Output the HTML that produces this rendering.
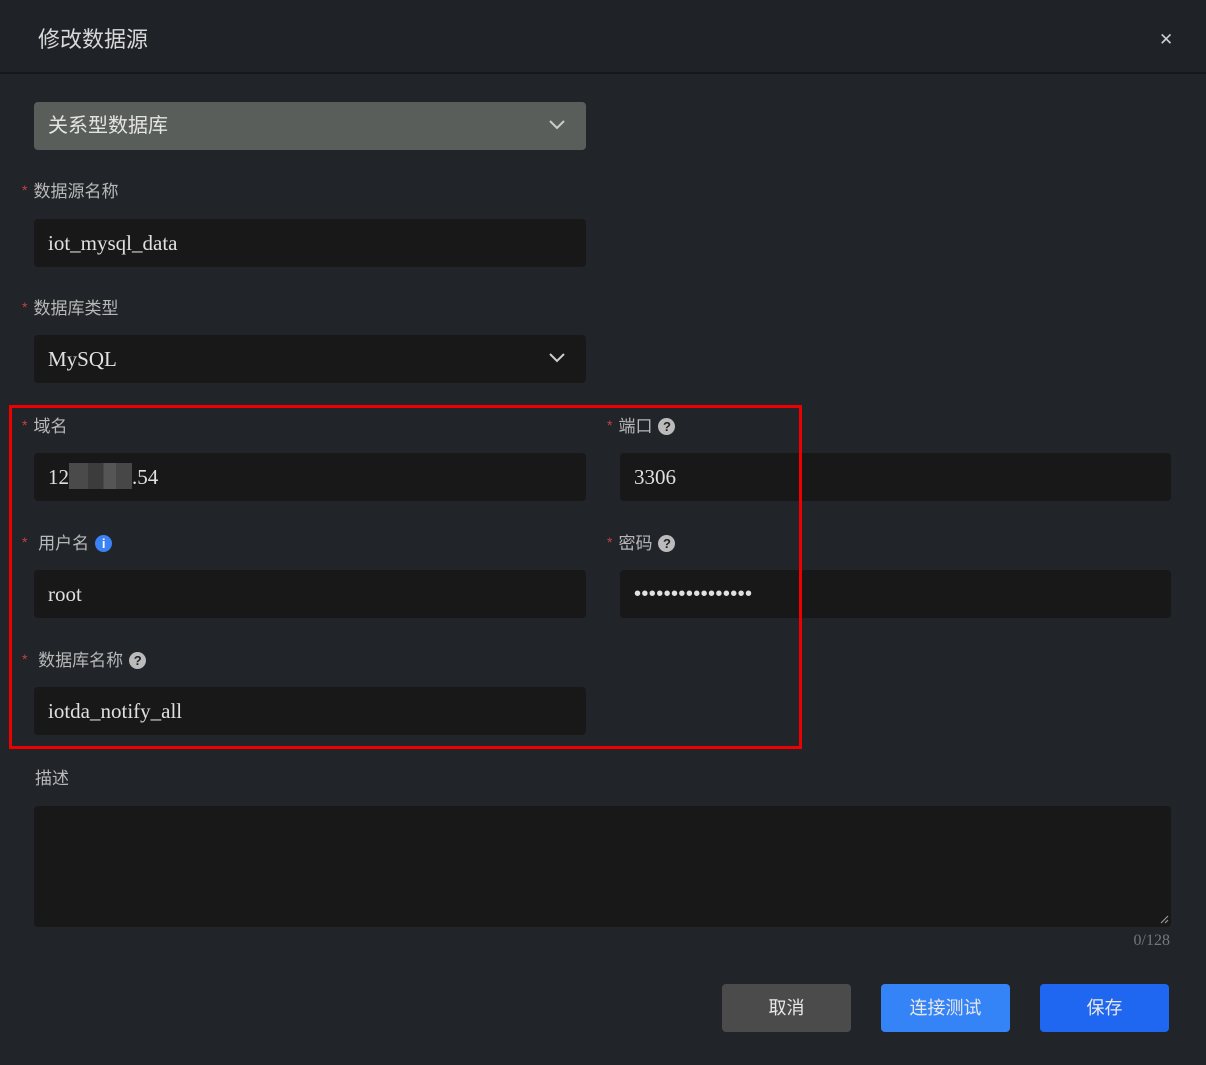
<!DOCTYPE html>
<html><head><meta charset="utf-8"><style>
*{box-sizing:border-box;margin:0;padding:0}
body{width:1206px;height:1065px;background:#212429;position:relative;overflow:hidden;font-family:"Liberation Sans","Noto Sans CJK SC",sans-serif;color:#c8c8c8}
.a{position:absolute}
.hdr{left:0;top:0;width:1206px;height:74px;border-bottom:2px solid #16181b;background:#1f2227}
.title{left:38px;top:22px;font-size:22px;color:#d8d8d8}
.x{left:1159px;top:30px;font-size:17px;color:#ccc}
.lab{font-size:17px;color:#b8b8b8}
.lab .s{color:#c0443f;font-size:14px;margin-right:6px;vertical-align:2px}
.in{background:#181818;border-radius:4px;height:48px;padding-left:14px;font-family:"Liberation Serif",serif;font-size:21px;color:#e0e0e0;line-height:48px}
.q{display:inline-block;width:17px;height:17px;border-radius:50%;background:#bbb;color:#222;font-size:13px;font-weight:bold;text-align:center;line-height:17px;vertical-align:1px;margin-left:6px}
.chev{position:absolute;right:20px;top:16px}
.btn{height:48px;border-radius:4px;top:984px;text-align:center;line-height:48px;font-size:18px;color:#e8e8e8}
</style></head><body>
<div class="a hdr"></div>
<div class="a title">修改数据源</div>
<div class="a x">✕</div>
<div class="a in" style="left:34px;top:102px;width:552px;background:#5a5e5b;font-family:'Liberation Sans','Noto Sans CJK SC',sans-serif;font-size:20px;color:#e4e4e4">关系型数据库<svg class="chev" width="18" height="12" viewBox="0 0 18 12"><path d="M2 3l7 7 7-7" stroke="#ccc" stroke-width="2" fill="none"/></svg></div>

<div class="a lab" style="left:22px;top:177px"><span class="s">*</span>数据源名称</div>
<div class="a in" style="left:34px;top:219px;width:552px">iot_mysql_data</div>

<div class="a lab" style="left:22px;top:294px"><span class="s">*</span>数据库类型</div>
<div class="a in" style="left:34px;top:335px;width:552px">MySQL<svg class="chev" width="18" height="12" viewBox="0 0 18 12"><path d="M2 3l7 7 7-7" stroke="#ccc" stroke-width="2" fill="none"/></svg></div>

<div class="a lab" style="left:22px;top:412px"><span class="s">*</span>域名</div>
<div class="a in" style="left:34px;top:453px;width:552px">12<span style="display:inline-block;width:63px;height:26px;vertical-align:-5px;background:linear-gradient(90deg,#4a4a4a 0 30%,#3c3c3c 30% 55%,#555 55% 75%,#474747 75%)"></span>.54</div>
<div class="a lab" style="left:607px;top:412px"><span class="s">*</span>端口<span class="q">?</span></div>
<div class="a in" style="left:620px;top:453px;width:551px">3306</div>

<div class="a lab" style="left:22px;top:529px"><span class="s">*</span> 用户名<span class="q" style="background:#3b82f6;color:#fff">i</span></div>
<div class="a in" style="left:34px;top:570px;width:552px">root</div>
<div class="a lab" style="left:607px;top:529px"><span class="s">*</span>密码<span class="q">?</span></div>
<div class="a in" style="left:620px;top:570px;width:551px;font-family:'Liberation Sans',sans-serif;font-size:20px;letter-spacing:0.4px">••••••••••••••••</div>

<div class="a lab" style="left:22px;top:646px"><span class="s">*</span> 数据库名称<span class="q">?</span></div>
<div class="a in" style="left:34px;top:687px;width:552px">iotda_notify_all</div>

<div class="a" style="left:9px;top:405px;width:793px;height:344px;border:3px solid #e00"></div>

<div class="a lab" style="left:35px;top:764px">描述</div>
<div class="a" style="left:34px;top:806px;width:1137px;height:121px;background:#181818;border-radius:4px"></div>
<svg class="a" style="left:1159px;top:914px" width="10" height="10"><path d="M9 2L2 9M9 6L6 9" stroke="#999" stroke-width="1.2"/></svg>
<div class="a" style="right:36px;top:932px;font-size:16px;color:#777;font-family:'Liberation Serif',serif">0/128</div>

<div class="a btn" style="left:722px;width:129px;background:#4b4b4b">取消</div>
<div class="a btn" style="left:881px;width:129px;background:#3483f7">连接测试</div>
<div class="a btn" style="left:1040px;width:129px;background:#1f67f0">保存</div>
</body></html>
